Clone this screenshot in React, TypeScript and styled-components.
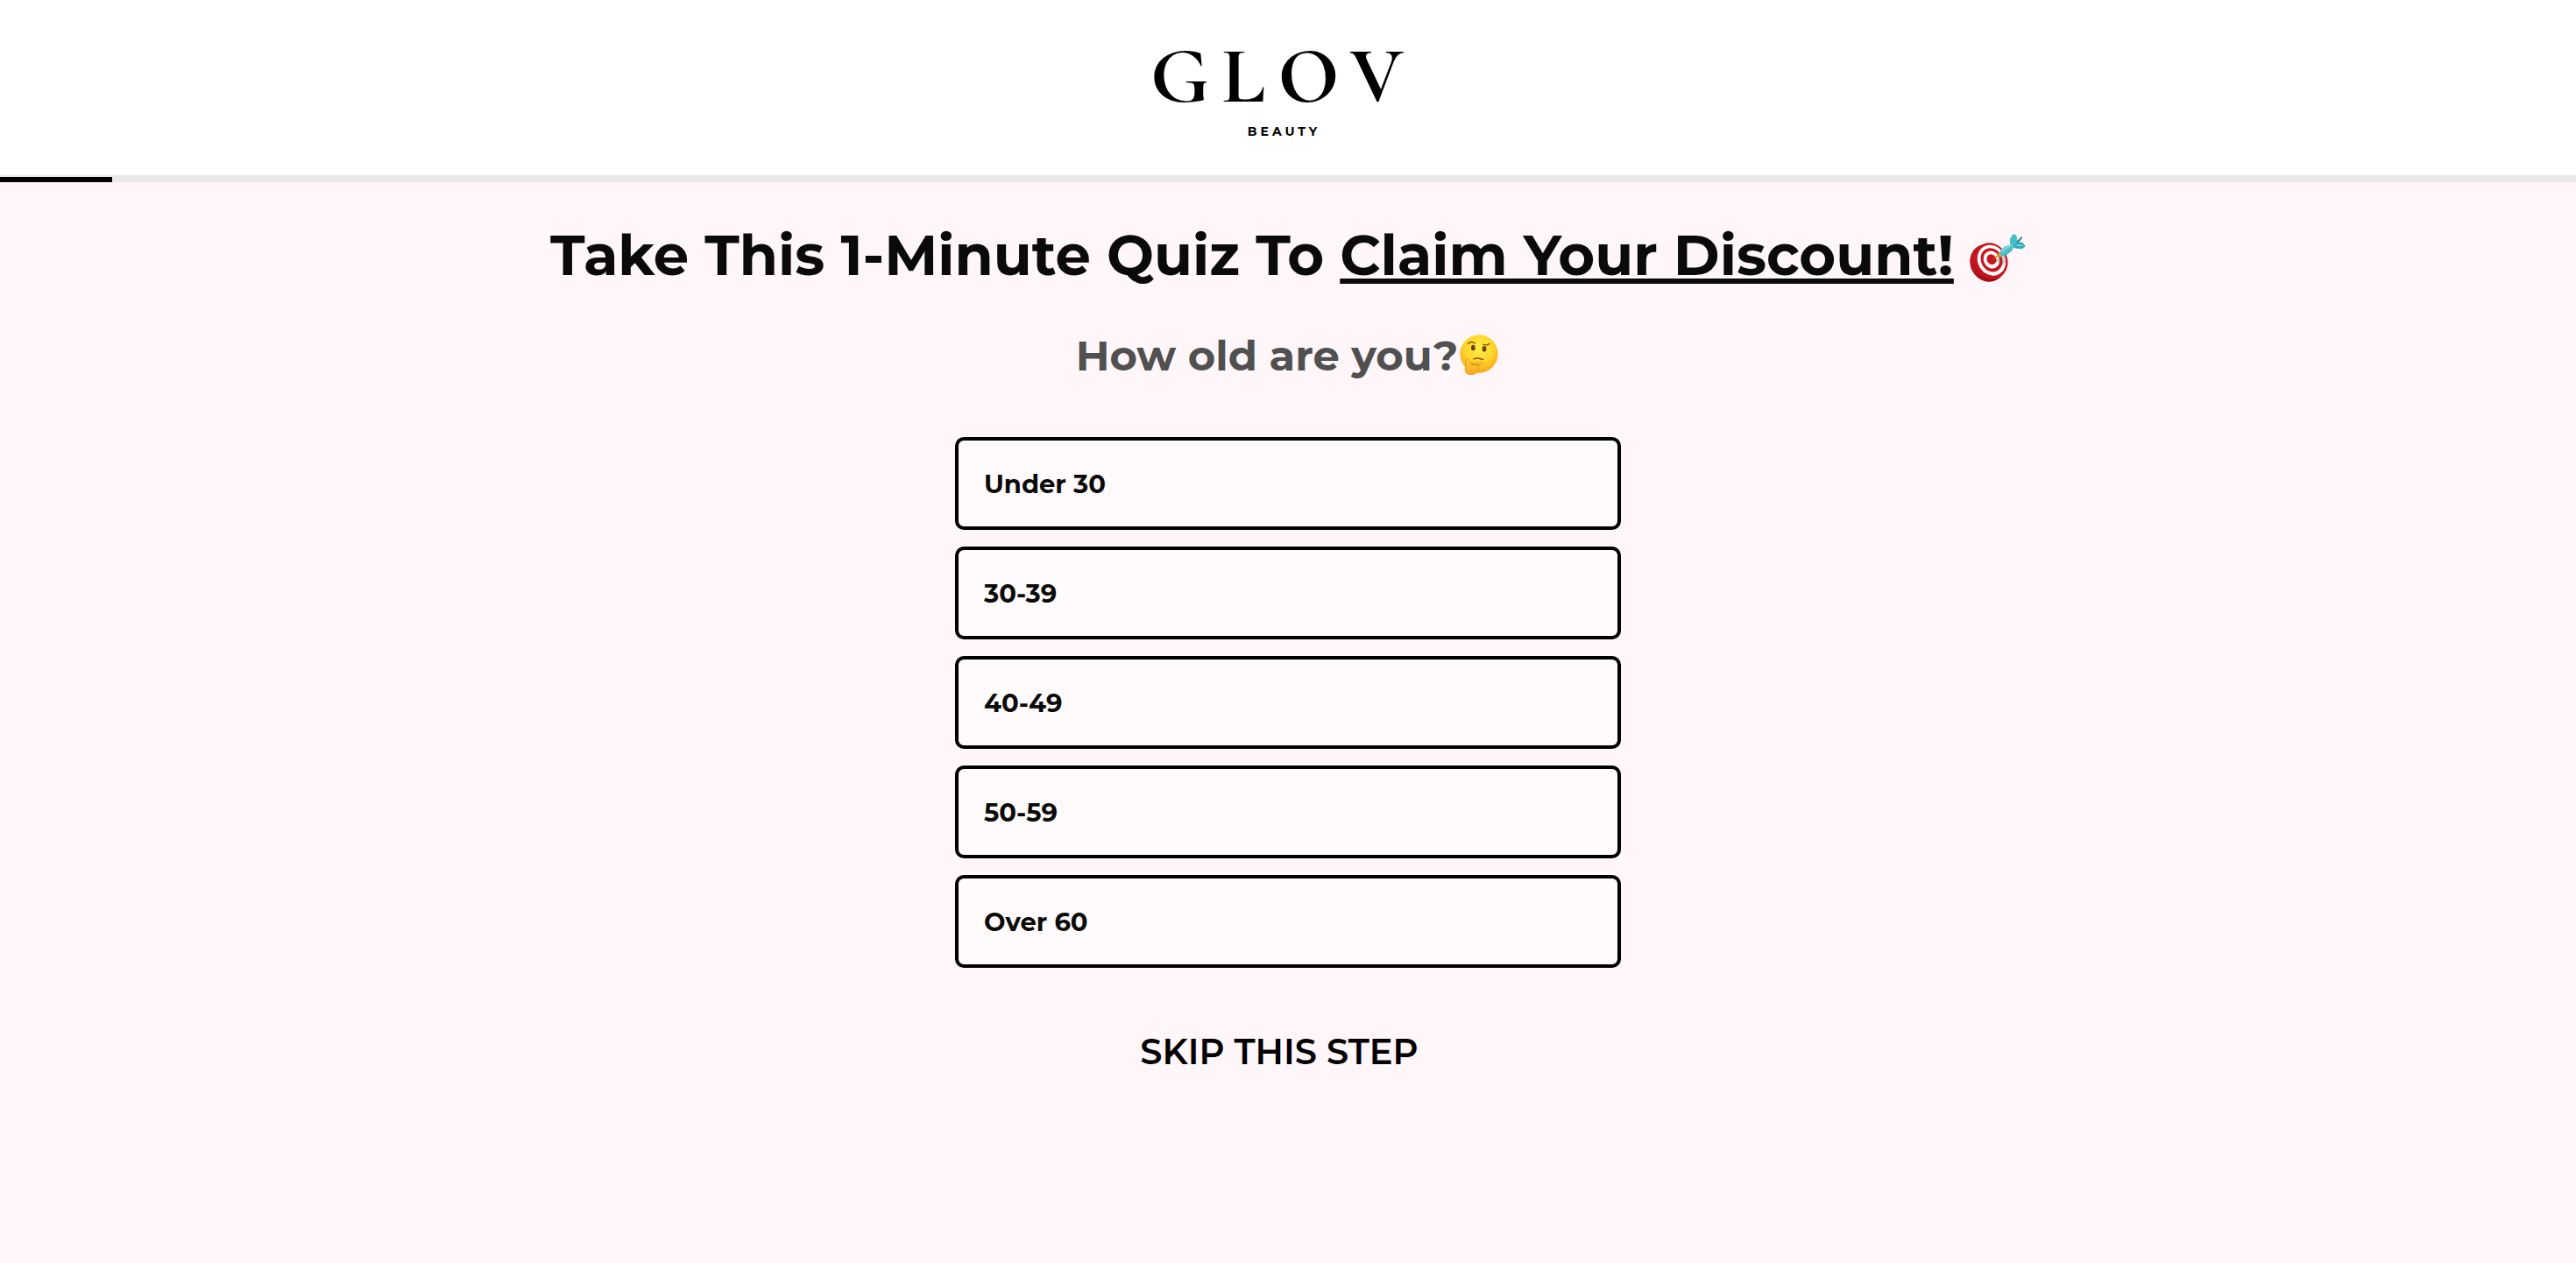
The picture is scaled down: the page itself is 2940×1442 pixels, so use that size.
import React, { useState } from "react";
import styled, { createGlobalStyle } from "styled-components";

const GlobalStyle = createGlobalStyle`
  *, *::before, *::after { box-sizing: border-box; }
  body {
    margin: 0;
    background: #fff6fa;
    color: #0a0a08;
    font-family: Montserrat, Inter, "Open Sans", sans-serif;
  }
`;

const Header = styled.header`
  display: flex;
  flex-direction: column;
  align-items: center;
  height: 200px;
  padding: 37px 12px 0 0;
  background: #ffffff;
  color: #000000;
`;

const Wordmark = styled.div`
  font-family: "Cormorant Garamond", Cormorant, "Liberation Serif", serif;
  font-size: 92px;
  font-weight: 700;
  line-height: 100px;
  letter-spacing: 14px;
`;

const Tagline = styled.div`
  padding: 1px 0 0 3px;
  font-size: 14px;
  font-weight: 700;
  line-height: 24px;
  letter-spacing: 4px;
`;

const ProgressTrack = styled.div`
  height: 8px;
  padding-top: 2px;
  background: #e9e9e9;
`;

const ProgressFill = styled.div`
  height: 6px;
  background: #000000;
`;

const Main = styled.main`
  display: flex;
  flex-direction: column;
  align-items: center;
  padding: 43px 24px 80px;
`;

const Title = styled.h1`
  margin: 0;
  font-size: 64px;
  font-weight: 700;
  line-height: 80px;
  text-align: center;
`;

const Underlined = styled.span`
  text-decoration: underline;
  text-decoration-thickness: 6px;
  text-underline-offset: 4px;
  text-decoration-skip-ink: none;
`;

const Question = styled.h2`
  margin: 45px 0 0;
  color: #505050;
  font-size: 48px;
  font-weight: 700;
  line-height: 60px;
  text-align: center;
`;

const TargetIcon = styled.svg`
  width: 64px;
  height: 55px;
  vertical-align: -8px;
`;

const FaceIcon = styled.svg`
  width: 44px;
  height: 46px;
  margin: 0 2px;
  vertical-align: -5px;
`;

const Options = styled.div`
  display: flex;
  flex-direction: column;
  gap: 19px;
  width: 100%;
  max-width: 760px;
  margin-top: 63px;
`;

const Option = styled.button<{ $selected: boolean }>`
  height: 106px;
  padding: 0 29px;
  border: 4px solid #000000;
  border-radius: 10px;
  background: ${(p) => (p.$selected ? "#ffe3ef" : "#fffafc")};
  color: inherit;
  font: inherit;
  font-size: 29px;
  font-weight: 700;
  text-align: left;
  cursor: pointer;
`;

const Skip = styled.button`
  margin: 72px 20px 0 0;
  padding: 0;
  border: 0;
  background: none;
  color: #000000;
  font: inherit;
  font-size: 40px;
  font-weight: 600;
  line-height: 48px;
  cursor: pointer;
`;

const Target = () => (
  <TargetIcon viewBox="0 0 192 164" role="img" aria-label="Bullseye">
    <defs>
      <linearGradient id="rim" x1="0" y1="0" x2="1" y2="1">
        <stop offset="0" stopColor="#c9202a" />
        <stop offset="0.5" stopColor="#a50f16" />
        <stop offset="1" stopColor="#8c0c10" />
      </linearGradient>
      <linearGradient id="dart" x1="0" y1="0" x2="1" y2="1">
        <stop offset="0" stopColor="#7fe0e6" />
        <stop offset="1" stopColor="#2a9fb0" />
      </linearGradient>
    </defs>
    <ellipse cx="62" cy="99" rx="60" ry="66" transform="rotate(-28 62 99)" fill="url(#rim)" />
    <ellipse cx="73" cy="92" rx="56" ry="63" transform="rotate(-28 73 92)" fill="#c9161d" />
    <ellipse cx="75" cy="90" rx="47" ry="54" transform="rotate(-28 75 90)" fill="#ffffff" />
    <ellipse cx="75" cy="89" rx="36" ry="42" transform="rotate(-28 75 89)" fill="#c9161d" />
    <ellipse cx="75" cy="88" rx="27" ry="31" transform="rotate(-28 75 88)" fill="#ffffff" />
    <ellipse cx="75" cy="87" rx="16" ry="18" transform="rotate(-28 75 87)" fill="#c9161d" />
    <path d="M80 89 L108 80 L123 72 L128 89 L115 109 L101 99 Z" fill="#6b4242" opacity="0.28" />
    <path d="M77 89 L99 68 L98 61 L108 70 L115 76 L106 78 L101 75 Z" fill="#e9b60e" />
    <path d="M79 87 L103 69" stroke="#8e5b0b" strokeWidth="2" />
    <path d="M138 36 L138 17 L148 0 L160 4 L164 29 L151 42 Z" fill="#48bec9" />
    <path d="M160 26 L178 8 L180 13 L165 34 Z" fill="#258e9f" />
    <path d="M147 43 L164 29 L181 29 L191 42 L178 51 L157 49 Z" fill="#2ca7b7" />
    <path d="M153 39 L171 35 L187 41 L174 42 Z" fill="#75d9df" />
    <path d="M101 62 L112 48 L126 39 L148 38 L151 44 L144 58 L130 69 L113 77 L105 72 Z" fill="url(#dart)" />
    <path d="M111 57 L128 45 L145 40" stroke="#a2edf0" strokeWidth="3" fill="none" />
  </TargetIcon>
);

const ThinkingFace = () => (
  <FaceIcon viewBox="0 0 132 138" role="img" aria-label="Thinking face">
    <defs>
      <radialGradient id="skin" cx="0.5" cy="0.35" r="0.68">
        <stop offset="0" stopColor="#fff04a" />
        <stop offset="0.55" stopColor="#ffd52c" />
        <stop offset="0.88" stopColor="#fcae1c" />
        <stop offset="1" stopColor="#ee900d" />
      </radialGradient>
      <linearGradient id="hand" x1="0" y1="0" x2="0" y2="1">
        <stop offset="0" stopColor="#ffd63b" />
        <stop offset="1" stopColor="#f9a41b" />
      </linearGradient>
    </defs>
    <circle cx="66" cy="66" r="65" fill="url(#skin)" />
    <path d="M28 32 Q38 20 53 30" stroke="#8a4a06" strokeWidth="4" fill="none" strokeLinecap="round" />
    <path d="M79 33 Q90 39 102 32" stroke="#8a4a06" strokeWidth="4" fill="none" strokeLinecap="round" />
    <ellipse cx="46" cy="45" rx="7" ry="10" fill="#6b3604" />
    <ellipse cx="84" cy="49" rx="7" ry="10" fill="#6b3604" />
    <circle cx="47" cy="41" r="2" fill="#c08a50" />
    <circle cx="85" cy="45" r="2" fill="#c08a50" />
    <path d="M47 84 Q63 77 80 86" stroke="#8a4a06" strokeWidth="4" fill="none" strokeLinecap="round" />
    <path
      d="M23 86 Q28 80 33 89 L35 99 Q52 97 76 94 Q83 97 77 102 L61 106 Q68 110 64 119 Q60 136 41 137 Q20 138 18 121 Z"
      fill="url(#hand)"
      stroke="#e88a12"
      strokeWidth="2"
      strokeLinejoin="round"
    />
    <path d="M39 102 Q51 105 67 103" stroke="#c66d08" strokeWidth="3" fill="none" />
  </FaceIcon>
);

const ages = ["Under 30", "30-39", "40-49", "50-59", "Over 60"];
const progress = 4.35;

export default function App() {
  const [selected, setSelected] = useState<string | null>(null);

  return (
    <>
      <GlobalStyle />
      <Header>
        <Wordmark>GLOV</Wordmark>
        <Tagline>BEAUTY</Tagline>
      </Header>
      <ProgressTrack role="progressbar" aria-label="Quiz progress" aria-valuenow={progress} aria-valuemin={0} aria-valuemax={100}>
        <ProgressFill style={{ width: `${progress}%` }} />
      </ProgressTrack>
      <Main>
        <Title>
          Take This 1-Minute Quiz To <Underlined>Claim Your Discount!</Underlined> <Target />
        </Title>
        <Question>
          How old are you?
          <ThinkingFace />
        </Question>
        <Options role="group" aria-label="How old are you?">
          {ages.map((age) => (
            <Option key={age} type="button" $selected={selected === age} aria-pressed={selected === age} onClick={() => setSelected(age)}>
              {age}
            </Option>
          ))}
        </Options>
        <Skip type="button">SKIP THIS STEP</Skip>
      </Main>
    </>
  );
}
